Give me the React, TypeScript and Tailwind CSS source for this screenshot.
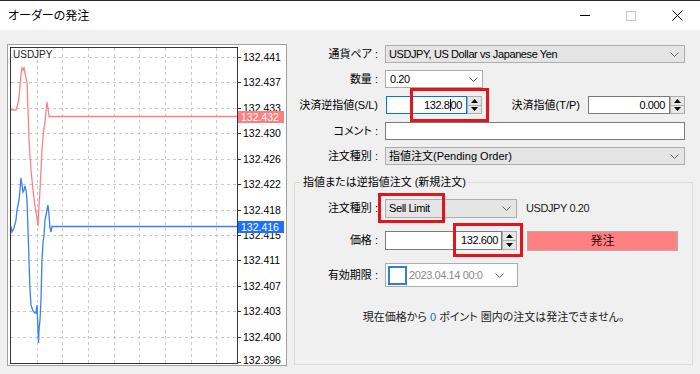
import React from 'react';

const labels = ['132.441', '132.437', '132.433', '132.430', '132.426', '132.422', '132.418', '132.415', '132.411', '132.407', '132.403', '132.400', '132.396'];
const gridX = [37, 62, 88, 114, 139, 165, 191, 216];

const redPts = '11,110 16,110 18,103 19,97 21,75 22,68 23,70 24,68 25,73 26,78 27,82 28,110 29,140 31,170 33,190 35,207 36,212 37,218 38,226 39,205 40,190 41,170 42,150 43,137 44,128 45,122 46,112 47,102 48,108 49,116.5 237,116.5';
const bluePts = '11,226 12,232 14,228 16,220 17,210 19,200 20,190 21,178 22,185 23,192 24,190 25,186 26,190 27,200 28,230 29,260 30,290 31,305 33,311 35,313 36,313 37,305 38,330 38.5,343 39,330 40,320 41,300 42,260 43,243 44,235 45,220 47,210 48,205 49,215 50,228 51,232 52,226.5 237,226.5';

function Chart() {
  return (
    <svg width="278" height="320" viewBox="8 45 278 320" className="block">
      <rect x="8" y="45" width="278" height="320" fill="#ffffff" />
      {gridX.map((x) => (
        <line key={x} x1={x + 0.5} y1={48} x2={x + 0.5} y2={363} stroke="#c8c8c8" strokeDasharray="3 3" />
      ))}
      {labels.slice(0, 12).map((l, i) => {
        const y = Math.round(57 + i * 25.42) + 0.5;
        return <line key={l} x1={11} y1={y} x2={237} y2={y} stroke="#c8c8c8" strokeDasharray="3 3" />;
      })}
      <rect x="10.5" y="47.5" width="227" height="316" fill="none" stroke="#333333" />
      {labels.map((l, i) => {
        const y = Math.round(57 + i * 25.42);
        const ty = i === 12 ? 364 : y + 4;
        return (
          <g key={l}>
            <line x1={238} y1={y + 0.5} x2={241} y2={y + 0.5} stroke="#333333" />
            <text x={243} y={ty} fontSize="10.5" fontFamily="Liberation Sans, sans-serif" fill="#000000">{l}</text>
          </g>
        );
      })}
      <text x={13} y={58} fontSize="10" fontFamily="Liberation Sans, sans-serif" fill="#222222">USDJPY</text>
      <polyline points={redPts} fill="none" stroke="#ff8282" strokeWidth="1.3" />
      <polyline points={bluePts} fill="none" stroke="#3a7dff" strokeWidth="1.3" />
      <rect x="238" y="111" width="46" height="12" fill="#ff7f7f" />
      <text x={241} y={121} fontSize="10.5" fontFamily="Liberation Sans, sans-serif" fill="#ffffff">132.432</text>
      <rect x="238" y="221" width="46" height="12" fill="#1f6fff" />
      <text x={241} y={231} fontSize="10.5" fontFamily="Liberation Sans, sans-serif" fill="#ffffff">132.416</text>
    </svg>
  );
}

function Chevron() {
  return (
    <svg width="9" height="5" viewBox="0 0 9 5" className="shrink-0">
      <polyline points="0.5,0.5 4.5,4.5 8.5,0.5" fill="none" stroke="#606060" strokeWidth="1" />
    </svg>
  );
}

function Spinner() {
  return (
    <div className="w-[15px] h-full bg-[#e6e6e6] border border-[#adadad] flex flex-col shrink-0">
      <div className="flex-1 flex items-center justify-center border-b border-[#adadad]">
        <svg width="7" height="4" viewBox="0 0 7 4"><polygon points="0,4 3.5,0 7,4" fill="#000000" /></svg>
      </div>
      <div className="flex-1 flex items-center justify-center">
        <svg width="7" height="4" viewBox="0 0 7 4"><polygon points="0,0 3.5,4 7,0" fill="#000000" /></svg>
      </div>
    </div>
  );
}

function Label({ children, w = 'w-[84px]' }: { children: React.ReactNode; w?: string }) {
  return <div className={`${w} shrink-0 text-right whitespace-nowrap`}>{children}</div>;
}

function RedBox({ className }: { className: string }) {
  return <div className={`absolute border-[3px] border-[#e3141c] pointer-events-none ${className}`} />;
}

export default function App() {
  return (
    <div className="w-[700px] h-[374px] bg-[#f0f0f0] overflow-hidden text-[11px] text-black font-['Liberation_Sans','Noto_Sans_CJK_JP',sans-serif] [font-feature-settings:'palt']">
      {/* title bar */}
      <div className="h-[30px] bg-white border-t border-[#2b2b2b] flex items-center">
        <span className="ml-[8px] text-[12px]">オーダーの発注</span>
        <div className="ml-auto flex h-full">
          <div className="w-[46px] flex items-center justify-center">
            <div className="w-[10px] h-px bg-black" />
          </div>
          <div className="w-[46px] flex items-center justify-center">
            <div className="w-[10px] h-[10px] border border-[#c4c4c4]" />
          </div>
          <div className="w-[46px] flex items-center justify-center">
            <svg width="11" height="11" viewBox="0 0 11 11">
              <path d="M0.5 0.5 L10.5 10.5 M10.5 0.5 L0.5 10.5" stroke="#000000" strokeWidth="1" />
            </svg>
          </div>
        </div>
      </div>

      <div className="flex pt-[14px] pl-[7px]">
        {/* chart */}
        <div className="w-[280px] h-[322px] border border-[#a0a0a0] shrink-0">
          <Chart />
        </div>

        {/* form */}
        <div className="ml-[7px] w-[399px] pt-[1px] flex flex-col">
          <div className="flex items-center h-[18px]">
            <Label>通貨ペア :</Label>
            <div className="ml-[7px] w-[300px] h-full bg-[#e5e5e5] border border-[#adadad] flex items-center pl-[3px] pr-[5px]">
              <span className="tracking-[-0.4px]">USDJPY, US Dollar vs Japanese Yen</span>
              <span className="ml-auto"><Chevron /></span>
            </div>
          </div>

          <div className="flex items-center h-[18px] mt-[7px]">
            <Label>数量 :</Label>
            <div className="ml-[7px] w-[98px] h-full bg-white border border-[#adadad] flex items-center pl-[4px] pr-[4px]">
              <span className="tracking-[-0.4px]">0.20</span>
              <span className="ml-auto"><Chevron /></span>
            </div>
          </div>

          <div className="relative flex items-center h-[18px] mt-[8px]">
            <Label>決済逆指値(S/L)</Label>
            <div className="ml-[8px] flex h-full">
              <div className="w-[81px] h-full bg-white border border-[#0078d7] flex items-center justify-end pr-[4px] tracking-[-0.4px]">
                132.8<span className="inline-block w-px h-[12px] bg-black" />00
              </div>
              <Spinner />
            </div>
            <Label w="w-[98px]">決済指値(T/P)</Label>
            <div className="ml-[8px] flex h-full">
              <div className="w-[82px] h-full bg-white border border-[#7a7a7a] flex items-center justify-end pr-[4px] tracking-[-0.4px]">
                0.000
              </div>
              <Spinner />
            </div>
            <RedBox className="left-[116px] top-[-8px] w-[79px] h-[34px]" />
          </div>

          <div className="flex items-center h-[18px] mt-[8px]">
            <Label>コメント :</Label>
            <div className="ml-[7px] w-[300px] h-full bg-white border border-[#7a7a7a]" />
          </div>

          <div className="flex items-center h-[18px] mt-[7px]">
            <Label>注文種別 :</Label>
            <div className="ml-[7px] w-[300px] h-full bg-[#e5e5e5] border border-[#adadad] flex items-center pl-[3px] pr-[5px]">
              <span>指値注文(Pending Order)</span>
              <span className="ml-auto"><Chevron /></span>
            </div>
          </div>

          <fieldset className="mt-[9px] w-[399px] h-[191px] border border-[#dcdcdc]">
            <legend className="ml-[6px] px-[2px] leading-[16px]">指値または逆指値注文 (新規注文)</legend>

            <div className="relative flex items-center h-[19px] mt-[9px]">
              <Label w="w-[83px]">注文種別 :</Label>
              <div className="ml-[7px] w-[132px] h-full bg-[#e5e5e5] border border-[#adadad] flex items-center pl-[3px] pr-[5px]">
                <span className="tracking-[-0.4px]">Sell Limit</span>
                <span className="ml-auto"><Chevron /></span>
              </div>
              <span className="ml-[9px] tracking-[-0.4px] text-[#202020]">USDJPY 0.20</span>
              <RedBox className="left-[83px] top-[-6px] w-[67px] h-[30px]" />
            </div>

            <div className="relative flex items-center h-[19px] mt-[13px]">
              <Label w="w-[83px]">価格 :</Label>
              <div className="ml-[7px] flex h-full">
                <div className="w-[117px] h-full bg-white border border-[#7a7a7a] flex items-center justify-end pr-[3px] tracking-[-0.4px]">
                  132.600
                </div>
                <Spinner />
              </div>
              <div className="ml-[10px] w-[151px] h-[20px] bg-[#ff8080] border border-[#b0b0b0] flex items-center justify-center text-[12px] text-[#3a0a0a]">
                発注
              </div>
              <RedBox className="left-[158px] top-[-8px] w-[70px] h-[34px]" />
            </div>

            <div className="flex items-center h-[24px] mt-[13px]">
              <Label w="w-[83px]">有効期限 :</Label>
              <div className="ml-[7px] w-[133px] h-full bg-white border border-[#adadad] flex items-center pl-[2px] pr-[13px]">
                <div className="w-[19px] h-[19px] border-2 border-[#2f7fd8] bg-white shrink-0" />
                <span className="ml-[2px] text-[#8a8a8a] tracking-[-0.4px]">2023.04.14 00:0</span>
                <span className="ml-auto"><Chevron /></span>
              </div>
            </div>

            <div className="mt-[22px] leading-[16px] text-center text-[#202020]">
              現在価格から <span className="text-[#1c5cd0]">0</span> ポイント 圏内の注文は発注できません。
            </div>
          </fieldset>
        </div>
      </div>
    </div>
  );
}
